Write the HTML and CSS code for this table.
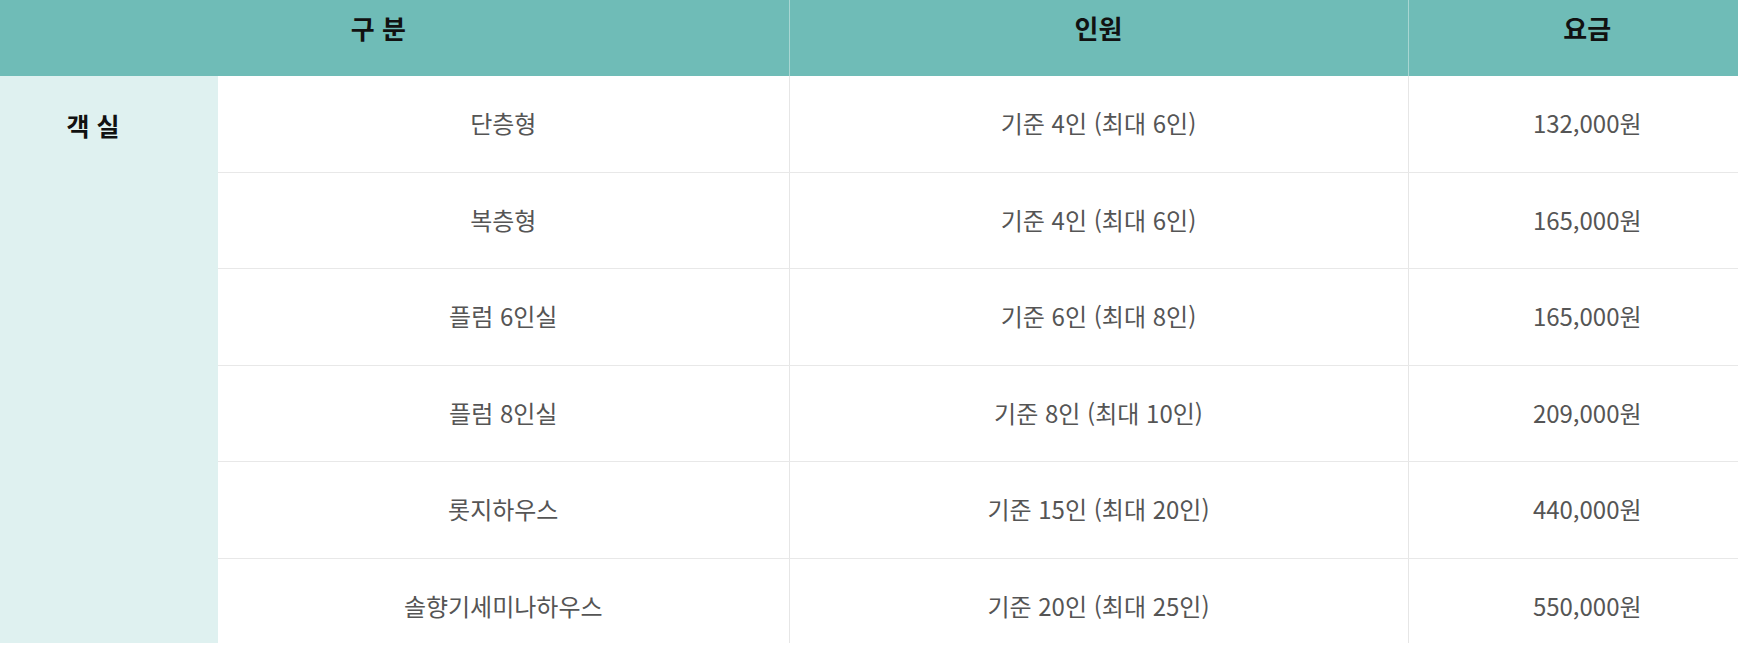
FILE: index.html
```html
<!DOCTYPE html>
<html lang="ko">
<head>
<meta charset="utf-8">
<link rel="stylesheet" href="styles.css">
</head>
<body>
<div class="viewport">
  <table class="price">
    <colgroup>
      <col class="c1"><col class="c2"><col class="c3"><col class="c4">
    </colgroup>
    <thead>
      <tr>
        <th colspan="2">구 분</th>
        <th>인원</th>
        <th>요금</th>
      </tr>
    </thead>
    <tbody>
      <tr>
        <th class="cat" rowspan="6">객 실</th>
        <td>단층형</td><td>기준 4인 (최대 6인)</td><td>132,000원</td>
      </tr>
      <tr><td>복층형</td><td>기준 4인 (최대 6인)</td><td>165,000원</td></tr>
      <tr><td>플럼 6인실</td><td>기준 6인 (최대 8인)</td><td>165,000원</td></tr>
      <tr><td>플럼 8인실</td><td>기준 8인 (최대 10인)</td><td>209,000원</td></tr>
      <tr><td>롯지하우스</td><td>기준 15인 (최대 20인)</td><td>440,000원</td></tr>
      <tr><td>솔향기세미나하우스</td><td>기준 20인 (최대 25인)</td><td>550,000원</td></tr>
    </tbody>
  </table>
</div>
</body>
</html>
```

FILE: styles.css
```css
html, body {
  margin: 0;
  padding: 0;
  background: #fff;
}
body {
  font-family: "Noto Sans CJK KR", "Noto Sans", sans-serif;
}
.viewport {
  height: 643px;
  overflow: hidden;
}
.price {
  border-collapse: collapse;
  table-layout: fixed;
  width: 1798px;
  margin: -20px 0 0 -32px;
}
.c1 { width: 250px; }
.c2 { width: 571px; }
.c3 { width: 619px; }
.c4 { width: 358px; }

.price thead th {
  background: #6fbcb7;
  color: #111;
  font-size: 26px;
  font-weight: 700;
  height: 96px;
  padding: 0;
  line-height: 1.2;
  text-align: center;
  vertical-align: middle;
  border-left: 1px solid #a8d6d2;
}
.price thead th:first-child {
  border-left: none;
}
.price tbody td {
  height: 95.5px;
  padding: 0;
  line-height: 1.2;
  text-align: center;
  vertical-align: middle;
  font-size: 24px;
  font-weight: 400;
  color: #555;
  border-bottom: 1px solid #e8e8e8;
  border-left: 1px solid #e6e6e6;
}
.price tbody td:first-of-type {
  border-left: none;
}
.price tbody .cat {
  background: #dff1f0;
  color: #111;
  font-size: 25px;
  font-weight: 700;
  line-height: 1.2;
  vertical-align: top;
  padding-top: 34px;
  border: none;
}
```
